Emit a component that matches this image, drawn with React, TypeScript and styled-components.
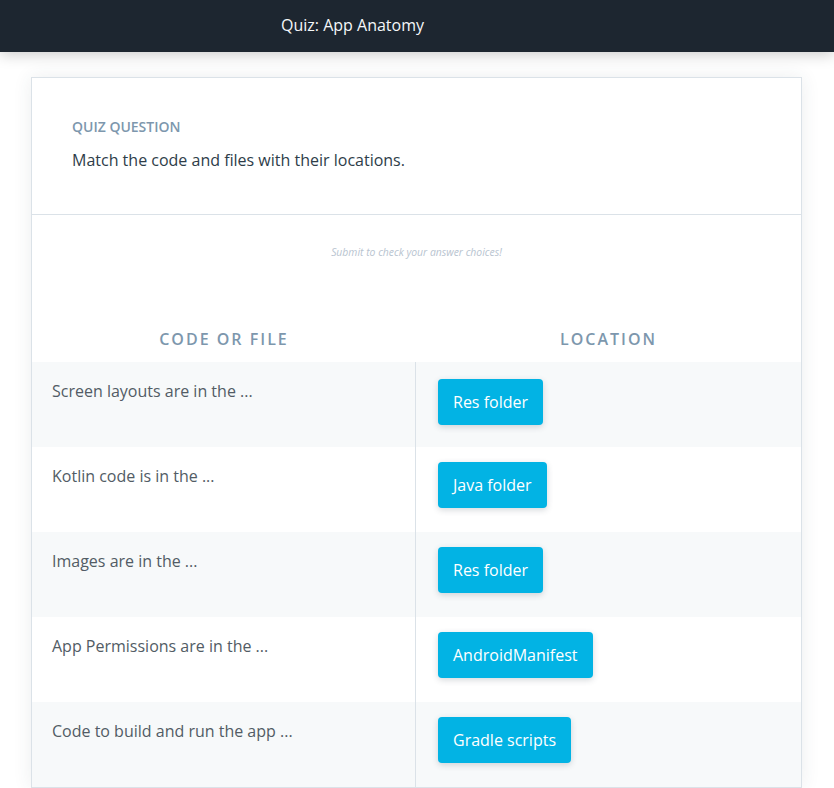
import React from "react";
import styled, { createGlobalStyle } from "styled-components";

const GlobalStyle = createGlobalStyle`
  html, body { margin: 0; padding: 0; }
  body {
    background: #ffffff;
    font-family: "Open Sans", "Noto Sans", sans-serif;
    -webkit-font-smoothing: antialiased;
  }
  * { box-sizing: border-box; }
`;

const Page = styled.div`
  min-height: 788px;
  overflow: hidden;
`;

const TopBar = styled.header`
  position: relative;
  z-index: 2;
  height: 52px;
  background: #1d2630;
  box-shadow: 0 2px 14px rgba(0, 0, 0, 0.22);
  display: flex;
  align-items: center;
  padding-left: 281px;
`;

const TopTitle = styled.h1`
  margin: 0;
  font-size: 16px;
  font-weight: 400;
  color: #f5f7f9;
  line-height: 24px;
  padding-bottom: 2px;
`;

const Main = styled.main`
  padding: 25px 0 0;
  display: flex;
  justify-content: center;
`;

const Card = styled.section`
  width: 771px;
  margin-right: 1px;
  background: #ffffff;
  border: 1px solid #dbe2e8;
  box-shadow: 0 0 18px rgba(46, 61, 73, 0.09);
`;

const QuestionBlock = styled.div`
  padding: 40px 40px 42px;
  border-bottom: 1px solid #dbe2e8;
`;

const Eyebrow = styled.div`
  font-size: 14px;
  line-height: 18px;
  font-weight: 600;
  color: #7d97ad;
  text-transform: uppercase;
`;

const Prompt = styled.p`
  margin: 12px 0 0;
  font-size: 16px;
  line-height: 24px;
  color: #2e3d49;
`;

const AnswerBlock = styled.div`
  padding-top: 30px;
`;

const Hint = styled.p`
  margin: 0;
  text-align: center;
  font-size: 10.4px;
  line-height: 15px;
  font-style: italic;
  font-weight: 400;
  color: #b8c4d0;
`;

const Columns = styled.div`
  display: grid;
  grid-template-columns: 384px 1fr;
  margin-top: 68px;
`;

const ColumnHead = styled.div`
  text-align: center;
  font-size: 16px;
  line-height: 22px;
  font-weight: 600;
  letter-spacing: 2px;
  color: #7d97ad;
  text-transform: uppercase;
  padding-bottom: 12px;
`;

const Cell = styled.div<{ $shaded: boolean }>`
  height: 85px;
  background: ${(p) => (p.$shaded ? "#f7f9fa" : "#ffffff")};
`;

const LeftCell = styled(Cell)`
  border-right: 1px solid #dbe2e8;
  padding: 17px 20px;
  font-size: 16px;
  line-height: 24px;
  color: #525c65;
`;

const RightCell = styled(Cell)<{ $first: boolean }>`
  padding: ${(p) => (p.$first ? "17px" : "15px")} 22px 0;
`;

const Choice = styled.button`
  height: 46px;
  padding: 0 15px;
  border: none;
  border-radius: 4px;
  background: #02b3e4;
  color: #ffffff;
  font-family: "Open Sans", "Noto Sans", sans-serif;
  font-size: 16px;
  line-height: 24px;
  box-shadow: 0 2px 6px rgba(46, 61, 73, 0.2);
  cursor: pointer;
`;

const rows = [
  { code: "Screen layouts are in the ...", location: "Res folder" },
  { code: "Kotlin code is in the ...", location: "Java folder" },
  { code: "Images are in the ...", location: "Res folder" },
  { code: "App Permissions are in the ...", location: "AndroidManifest" },
  { code: "Code to build and run the app ...", location: "Gradle scripts" },
];

export default function App() {
  return (
    <Page>
      <GlobalStyle />
      <TopBar>
        <TopTitle>Quiz: App Anatomy</TopTitle>
      </TopBar>
      <Main>
        <Card>
          <QuestionBlock>
            <Eyebrow>Quiz Question</Eyebrow>
            <Prompt>Match the code and files with their locations.</Prompt>
          </QuestionBlock>
          <AnswerBlock>
            <Hint>Submit to check your answer choices!</Hint>
            <Columns>
              <ColumnHead>Code or File</ColumnHead>
              <ColumnHead>Location</ColumnHead>
              {rows.map((r, i) => (
                <React.Fragment key={i}>
                  <LeftCell $shaded={i % 2 === 0}>{r.code}</LeftCell>
                  <RightCell $shaded={i % 2 === 0} $first={i === 0}>
                    <Choice>{r.location}</Choice>
                  </RightCell>
                </React.Fragment>
              ))}
            </Columns>
          </AnswerBlock>
        </Card>
      </Main>
    </Page>
  );
}
